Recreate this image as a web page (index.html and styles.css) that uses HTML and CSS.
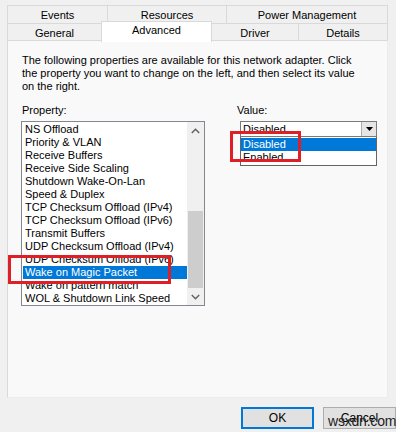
FILE: index.html
```html
<!DOCTYPE html>
<html>
<head>
<meta charset="utf-8">
<link rel="stylesheet" href="styles.css">
</head>
<body>
<div class="dialog">
  <div class="tabs">
    <div class="tabrow row1">
      <div class="tab w-events">Events</div>
      <div class="tab w-resources">Resources</div>
      <div class="tab w-power">Power Management</div>
    </div>
    <div class="tabrow row2">
      <div class="tab w-general">General</div>
      <div class="tab active w-advanced">Advanced</div>
      <div class="tab w-driver">Driver</div>
      <div class="tab w-details">Details</div>
    </div>
  </div>
  <div class="panel">
    <p class="intro">The following properties are available for this network adapter. Click<br>the property you want to change on the left, and then select its value<br>on the right.</p>
    <div class="cols">
      <div class="col-prop">
        <div class="label">Property:</div>
        <div class="listbox">
          <ul class="items">
            <li>NS Offload</li>
            <li>Priority &amp; VLAN</li>
            <li>Receive Buffers</li>
            <li>Receive Side Scaling</li>
            <li>Shutdown Wake-On-Lan</li>
            <li>Speed &amp; Duplex</li>
            <li>TCP Checksum Offload (IPv4)</li>
            <li>TCP Checksum Offload (IPv6)</li>
            <li>Transmit Buffers</li>
            <li>UDP Checksum Offload (IPv4)</li>
            <li>UDP Checksum Offload (IPv6)</li>
            <li class="sel">Wake on Magic Packet</li>
            <li>Wake on pattern match</li>
            <li>WOL &amp; Shutdown Link Speed</li>
          </ul>
          <div class="scrollbar">
            <div class="sb-arrow">
              <svg width="9" height="6" viewBox="0 0 9 6"><path d="M0.8 5 L4.5 1.3 L8.2 5" fill="none" stroke="#606060" stroke-width="1.4"/></svg>
            </div>
            <div class="sb-track"><div class="sb-thumb"></div></div>
            <div class="sb-arrow">
              <svg width="9" height="6" viewBox="0 0 9 6"><path d="M0.8 1 L4.5 4.7 L8.2 1" fill="none" stroke="#606060" stroke-width="1.4"/></svg>
            </div>
          </div>
        </div>
      </div>
      <div class="col-val">
        <div class="label">Value:</div>
        <div class="combo">
          <div class="combo-box">
            <span class="combo-text">Disabled</span>
            <span class="combo-btn">
              <svg width="7" height="4" viewBox="0 0 7 4"><path d="M0 0 L7 0 L3.5 4 Z" fill="#000"/></svg>
            </span>
          </div>
          <ul class="dropdown">
            <li class="sel">Disabled</li>
            <li>Enabled</li>
          </ul>
          <div class="mark mark-value"></div>
        </div>
      </div>
    </div>
    <div class="mark mark-prop"></div>
  </div>
  <div class="buttons">
    <div class="btn default">OK</div>
    <div class="btn">Cancel<span class="watermark">wsxdn.com</span></div>
  </div>
</div>
</body>
</html>
```
FILE: styles.css
```css
* { box-sizing: border-box; }
html, body {
  margin: 0;
  padding: 0;
  background: #f0f0f0;
}
body {
  font-family: "Liberation Sans", Arial, sans-serif;
  font-size: 11px;
  color: #000;
  width: 396px;
  height: 432px;
  overflow: hidden;
}
.dialog {
  padding: 5px 0 0 7px;
  width: 396px;
}
.tabs { width: 381px; }
.tabrow { display: flex; }
.row1 { height: 18px; }
.row2 { height: 17px; position: relative; }
.tab {
  border: 1px solid #d9d9d9;
  border-right: none;
  border-bottom: none;
  background: #f0f0f0;
  text-align: center;
  line-height: 18px;
  color: #000;
}
.row2 .tab { line-height: 18px; }
.tabrow .tab:last-child { border-right: 1px solid #d9d9d9; }
.w-events { width: 100px; }
.w-resources { width: 119px; }
.w-power { width: 162px; }
.w-general { width: 94px; }
.w-advanced { width: 111px; }
.w-driver { width: 86px; }
.w-details { width: 90px; }
.row2 .tab.active {
  background: #ffffff;
  margin-top: -2px;
  height: 21px;
  line-height: 17px;
  position: relative;
  z-index: 2;
  border-right: 1px solid #d9d9d9;
}
.tab.active + .tab { border-left: none; }

.panel {
  position: relative;
  width: 381px;
  height: 358px;
  background: #f9f9f9;
  border: 1px solid #d9d9d9;
  border-right-color: #ececec;
  border-bottom-color: #ececec;
  padding: 13px 12px 0 13px;
}
.intro {
  margin: 0;
  line-height: 13px;
  white-space: nowrap;
  padding-left: 1px;
}
.cols {
  display: flex;
  margin-top: 11px;
}
.col-prop { width: 184px; }
.col-val { margin-left: 31px; }
.label {
  line-height: 13px;
  height: 17px;
  padding-left: 1px;
}
.listbox {
  display: flex;
  width: 184px;
  height: 185px;
  background: #fff;
  border: 1px solid #828790;
}
.items {
  list-style: none;
  margin: 0;
  padding: 1px 0 0 1px;
  flex: 1;
}
.items li {
  height: 13px;
  line-height: 13px;
  padding-left: 2px;
  white-space: nowrap;
}
.items li.sel {
  background: #0078d7;
  color: #fff;
}
.scrollbar {
  width: 17px;
  display: flex;
  flex-direction: column;
  background: #f0f0f0;
}
.sb-arrow {
  height: 17px;
  display: flex;
  align-items: center;
  justify-content: center;
}
.sb-track {
  flex: 1;
  display: flex;
  flex-direction: column;
  justify-content: flex-end;
  padding: 0 1px;
}
.sb-thumb {
  height: 77px;
  background: #cdcdcd;
}

.combo {
  position: relative;
  width: 137px;
  margin-left: 4px;
}
.combo-box {
  display: flex;
  height: 16px;
  background: #fff;
  border: 1px solid #7a7a7a;
}
.combo-text {
  flex: 1;
  line-height: 14px;
  padding-left: 2px;
}
.combo-btn {
  width: 15px;
  height: 14px;
  background: #e5e5e5;
  border-left: 1px solid #acacac;
  display: flex;
  align-items: center;
  justify-content: center;
}
.dropdown {
  list-style: none;
  margin: 0;
  padding: 1px 0;
  background: #fff;
  border: 1px solid #646464;
  border-top: none;
}
.dropdown li {
  height: 13px;
  line-height: 13px;
  padding-left: 2px;
}
.dropdown li.sel {
  background: #0078d7;
  color: #fff;
}

.mark {
  position: absolute;
  border: 3px solid #df1f26;
}
.mark-prop {
  left: 0;
  top: 214px;
  width: 163px;
  height: 29px;
}
.mark-value {
  left: -10px;
  top: 10px;
  width: 71px;
  height: 31px;
}

.buttons {
  display: flex;
  justify-content: flex-end;
  gap: 9px;
  margin-top: 9px;
  width: 389px;
}
.btn {
  position: relative;
  width: 73px;
  height: 22px;
  background: #e1e1e1;
  border: 1px solid #adadad;
  text-align: center;
  line-height: 20px;
  font-size: 12px;
}
.btn.default {
  border: 2px solid #0078d7;
  line-height: 18px;
}
.watermark {
  position: absolute;
  left: 4px;
  top: 3px;
  font-size: 14px;
  color: #222;
  letter-spacing: -0.2px;
}
```
